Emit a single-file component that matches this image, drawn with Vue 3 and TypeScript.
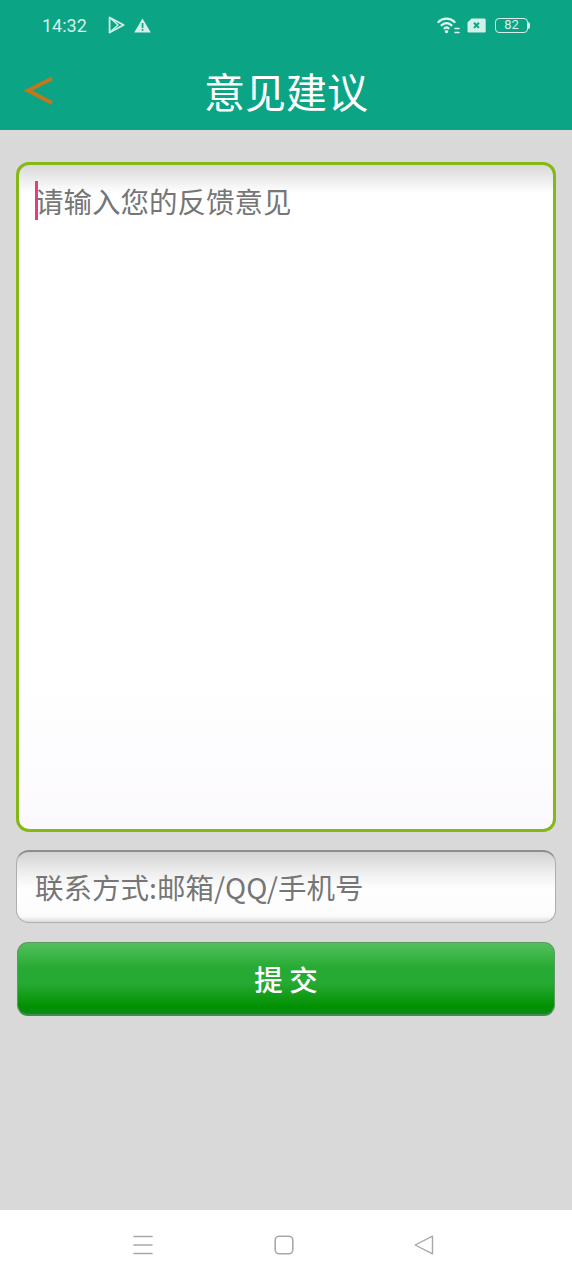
<script setup lang="ts">
const title: string = '意见建议'
</script>

<template>
  <div class="page">
    <header class="top">
      <div class="status">
        <span class="time">14:32</span>
        <svg class="play" width="17" height="18" viewBox="0 0 17 18" fill="none" stroke="#d4f0e8" stroke-width="1.8" stroke-linejoin="round">
          <path d="M1.6 1.5 L15.6 9 L1.6 16.5 Z" />
          <path d="M1.6 1.5 L10 9 L1.6 16.5 M5 13.5 L10 9 L5 4.5" stroke-width="1.4" />
        </svg>
        <svg class="warn" width="17" height="15" viewBox="0 0 17 15">
          <path d="M8.5 0.5 L16.8 14.5 L0.2 14.5 Z" fill="#d4f0e8" />
          <rect x="7.7" y="5" width="1.7" height="5" fill="#0ba585" />
          <rect x="7.7" y="11" width="1.7" height="1.7" fill="#0ba585" />
        </svg>
        <span class="spacer"></span>
        <svg class="wifi" width="23" height="17" viewBox="0 0 23 17" fill="none" stroke="#e4f6f1" stroke-width="2.3" stroke-linecap="round">
          <path d="M1.5 5 C6 0.6 13 0.6 17.5 5" />
          <path d="M4.6 8.2 C7.7 5.6 11.3 5.6 14.4 8.2" />
          <path d="M7.6 11.2 C8.8 10.3 10.2 10.3 11.4 11.2" />
          <circle cx="9.5" cy="14.6" r="1.7" fill="#e4f6f1" stroke="none" />
          <path d="M18 11.6 H22 M18 15.4 H22" stroke-width="1.5" />
        </svg>
        <svg class="sim" width="19" height="15" viewBox="0 0 19 15">
          <path d="M4.5 0.5 H17.5 Q18.7 0.5 18.7 2 V13 Q18.7 14.5 17.5 14.5 H2 Q0.5 14.5 0.5 13 V4.5 Z" fill="#d4f0e8" />
          <path d="M7 4.8 L11.9 9.9 M11.9 4.8 L7 9.9" stroke="#0ba585" stroke-width="2" />
        </svg>
        <span class="battery"><span class="level">82</span></span>
        <span class="nub"></span>
      </div>
      <div class="bar">
        <svg class="back" width="32" height="34" viewBox="0 0 32 34" fill="none" stroke="#c2771c" stroke-width="4">
          <path d="M29 3.5 L5 15.5 L29 28" />
        </svg>
        <h1 class="title">{{ title }}</h1>
      </div>
    </header>

    <main class="content">
      <div class="feedback">
        <span class="caret"></span>
        <span class="hint">请输入您的反馈意见</span>
      </div>
      <div class="contact"><span class="hint">联系方式:邮箱/QQ/手机号</span></div>
      <button class="submit" type="button">提 交</button>
    </main>

    <nav class="nav">
      <svg width="20" height="22" viewBox="0 0 20 22" fill="none" stroke="#a8a8a8" stroke-width="1.6" stroke-linecap="round">
        <path d="M1 2.5 H19 M1 11 H19 M1 19.5 H19" />
      </svg>
      <svg width="20" height="20" viewBox="0 0 20 20" fill="none" stroke="#a8a8a8" stroke-width="1.6">
        <rect x="1.2" y="1.2" width="17.6" height="17.6" rx="4" />
      </svg>
      <svg width="20" height="20" viewBox="0 0 20 20" fill="none" stroke="#a8a8a8" stroke-width="1.4" stroke-linejoin="round">
        <path d="M18.5 1.2 V18.8 L1.2 10 Z" />
      </svg>
    </nav>
  </div>
</template>

<style>
html, body { margin: 0; padding: 0; }
</style>

<style scoped>
.page {
  width: 572px;
  height: 1280px;
  display: flex;
  flex-direction: column;
  background: #d9d9d9;
  font-family: "Noto Sans CJK SC", "Noto Sans", sans-serif;
  overflow: hidden;
}
.top {
  height: 130px;
  flex: none;
  background: #0ba585;
  display: flex;
  flex-direction: column;
}
.status {
  height: 50px;
  display: flex;
  align-items: center;
  padding: 0 42px;
  box-sizing: border-box;
  color: #d4f0e8;
}
.time {
  font-family: Roboto, sans-serif;
  font-size: 18px;
  width: 66px;
}
.play { margin-right: 9px; }
.spacer { flex: 1; }
.wifi { margin-right: 7px; }
.sim { margin-right: 9px; }
.battery {
  width: 33px;
  height: 15px;
  box-sizing: border-box;
  border: 1.3px solid #d4f0e8;
  border-radius: 4px;
  display: flex;
  align-items: center;
  justify-content: center;
}
.level {
  font-family: Roboto, sans-serif;
  font-size: 13px;
  line-height: 14px;
  color: #d4f0e8;
}
.nub {
  width: 2px;
  height: 7px;
  margin-left: 0;
  background: #d4f0e8;
  border-radius: 0 2px 2px 0;
}
.bar {
  position: relative;
  flex: 1;
  display: flex;
  align-items: center;
  justify-content: center;
}
.back {
  position: absolute;
  left: 23px;
  top: 25px;
}
.title {
  margin: 0;
  font-size: 41px;
  font-weight: 400;
  color: #fff;
  line-height: 80px;
}
.content {
  flex: 1;
  display: flex;
  flex-direction: column;
  padding: 32px 16px 0;
  box-sizing: border-box;
}
.hint {
  font-size: 28.5px;
  font-weight: 400;
  color: #767676;
  line-height: 40px;
}
.feedback {
  position: relative;
  height: 670px;
  box-sizing: border-box;
  border: 3px solid #85b715;
  border-radius: 13px;
  background: linear-gradient(#d9d9d9 0, #ffffff 28px, #ffffff 520px, #fbf9fd 100%);
  padding: 16px 16px;
}
.caret {
  position: absolute;
  left: 16px;
  top: 16px;
  width: 3px;
  height: 39px;
  background: #e0407f;
}
.contact {
  margin-top: 18px;
  height: 73px;
  box-sizing: border-box;
  border: 1px solid #aeaeae;
  border-top: 2px solid #8c8c8c;
  border-radius: 13px;
  background: linear-gradient(#d2d2d2 0, #f0f0f0 22px, #ffffff 38px, #fcfbfd 64px, #dcdcdc 100%);
  padding: 0 18px;
  display: flex;
  align-items: center;
}
.submit {
  margin: 19px 0 0 1px;
  width: 538px;
  height: 74px;
  box-sizing: border-box;
  border: 1px solid #5c9a60;
  border-bottom: 2px solid #3f8f48;
  border-radius: 11px;
  background: linear-gradient(#52c05c 0, #27aa33 25px, #27aa33 40px, #009000 64px, #0e8b1a 100%);
  color: #fff;
  font-family: inherit;
  font-size: 28.5px;
  font-weight: 500;
  padding: 0;
  display: flex;
  align-items: center;
  justify-content: center;
}
.nav {
  height: 70px;
  flex: none;
  background: #fff;
  display: flex;
  align-items: center;
  padding: 0 138px 0 133px;
  justify-content: space-between;
  box-sizing: border-box;
}
</style>
